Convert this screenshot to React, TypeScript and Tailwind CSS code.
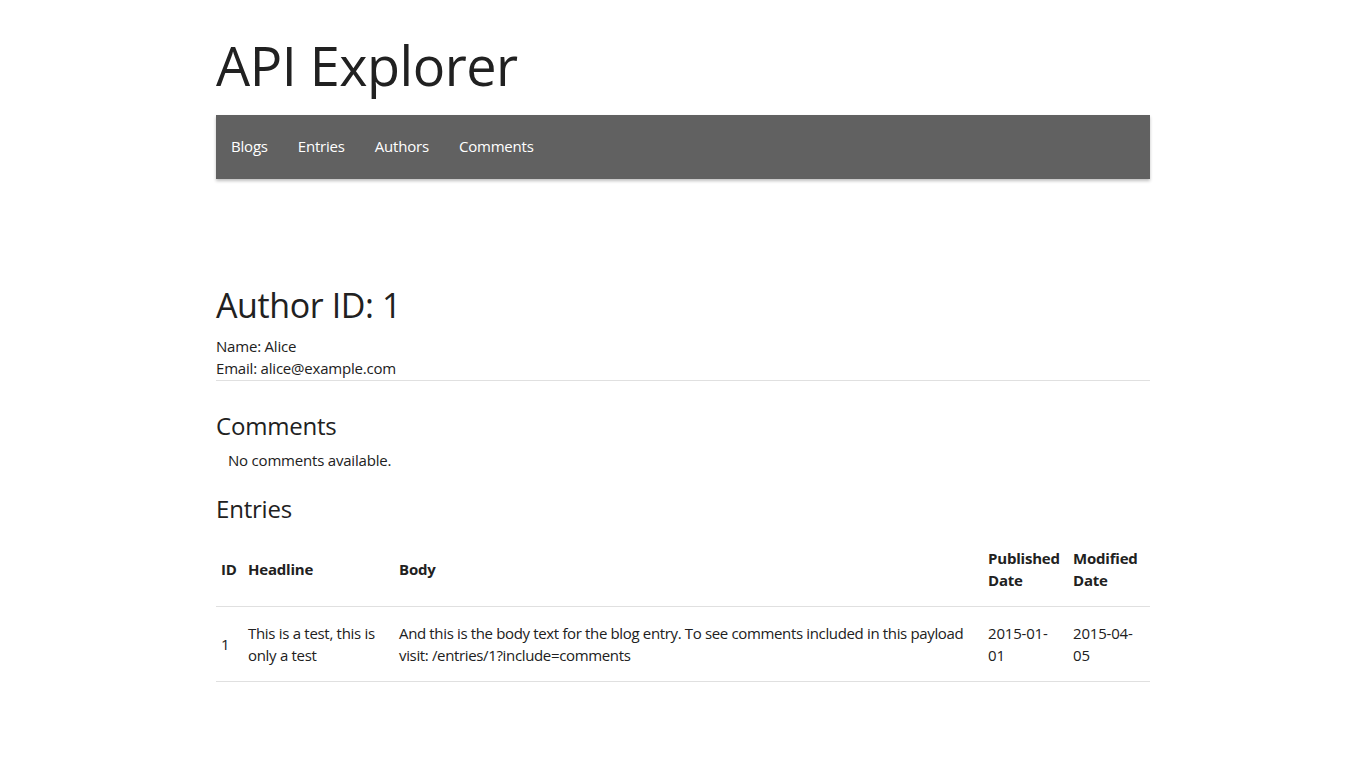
const navLinks = ["Blogs", "Entries", "Authors", "Comments"];

const entries = [
  {
    id: 1,
    headline: "This is a test, this is only a test",
    body: "And this is the body text for the blog entry. To see comments included in this payload visit: /entries/1?include=comments",
    published: "2015-01-01",
    modified: "2015-04-05",
  },
];

export default function App() {
  return (
    <div
      className="min-h-screen bg-white text-[#212121] text-[15px] leading-[22px] tracking-[-0.2px]"
      style={{ fontFamily: '"Open Sans", "Noto Sans", sans-serif' }}
    >
      <div className="w-[934px] mx-auto">
        <h1 className="text-[54px] leading-[64px] pt-[33px] mb-[18px] tracking-[-0.5px]">API Explorer</h1>

        <nav className="h-16 pb-[2px] bg-[#616161] flex items-center shadow-[0_2px_3px_rgba(0,0,0,0.25)]">
          {navLinks.map((l) => (
            <a key={l} href="#" className="px-[15px] text-white text-[15px] leading-[60px]">
              {l}
            </a>
          ))}
        </nav>

        <div className="mt-[108px]">
          <h4 className="text-[34px] leading-[37px] mb-[11px] tracking-[-0.4px]">Author ID: 1</h4>
          <div>Name: Alice</div>
          <div>Email: alice@example.com</div>
          <div className="mt-px border-b border-[#e0e0e0]" />

          <h5 className="text-[24px] leading-[27px] mt-[31px] mb-[10px]">Comments</h5>
          <div className="pl-3">No comments available.</div>

          <h5 className="text-[24px] leading-[27px] mt-[24px] mb-[10px]">Entries</h5>
          <table className="w-full border-collapse text-left">
            <thead>
              <tr className="border-b border-[#e0e0e0]">
                <th className="w-[27px] px-[5px] py-[15px] font-bold">ID</th>
                <th className="w-[151px] px-[5px] py-[15px] font-bold">Headline</th>
                <th className="px-[5px] py-[15px] font-bold">Body</th>
                <th className="w-[85px] px-[5px] py-[15px] font-bold">Published Date</th>
                <th className="w-[82px] px-[5px] py-[15px] font-bold">Modified Date</th>
              </tr>
            </thead>
            <tbody>
              {entries.map((e) => (
                <tr key={e.id} className="border-b border-[#e0e0e0]">
                  <td className="px-[5px] py-[15px]">{e.id}</td>
                  <td className="px-[5px] py-[15px] tracking-[-0.3px]">{e.headline}</td>
                  <td className="px-[5px] py-[15px] tracking-[-0.35px]">{e.body}</td>
                  <td className="px-[5px] py-[15px]">{e.published}</td>
                  <td className="px-[5px] py-[15px]">{e.modified}</td>
                </tr>
              ))}
            </tbody>
          </table>
        </div>
      </div>
    </div>
  );
}
